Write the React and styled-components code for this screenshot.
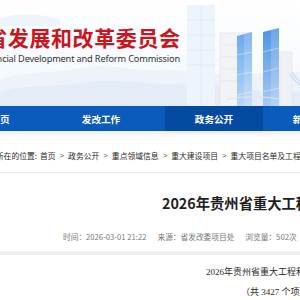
import React from "react";
import styled, { createGlobalStyle } from "styled-components";

const GlobalStyle = createGlobalStyle`
  body {
    margin: 0;
    background: #fff;
    font-family: "Noto Sans CJK SC", "Noto Sans", sans-serif;
    overflow: hidden;
  }
`;

const crumbs = ["首页", "政务公开", "重点领域信息", "重大建设项目", "重大项目名单及工程信息"];

function BannerArt() {
  return (
    <Art viewBox="0 0 300 106" preserveAspectRatio="none">
      <defs>
        <linearGradient id="sky" x1="0" y1="0" x2="0" y2="1">
          <stop offset="0" stopColor="#ffffff" />
          <stop offset="1" stopColor="#f2f7fd" />
        </linearGradient>
        <linearGradient id="towerL" x1="0" y1="0" x2="0" y2="1">
          <stop offset="0" stopColor="#6aa8ee" />
          <stop offset="1" stopColor="#b9d6f6" />
        </linearGradient>
        <linearGradient id="towerR" x1="0" y1="0" x2="0" y2="1">
          <stop offset="0" stopColor="#4e93e4" />
          <stop offset="1" stopColor="#a7caf3" />
        </linearGradient>
      </defs>
      <rect width="300" height="106" fill="url(#sky)" />
      <path d="M0 18 C20 12 45 14 60 20 L60 26 L0 26 Z" fill="#eef4fc" />
      <path d="M0 80 C30 70 50 74 80 68 C110 62 130 72 160 70 C185 68 200 76 230 74 L300 72 L300 106 L0 106 Z" fill="#eef3fa" />
      <path d="M0 92 C25 84 55 88 90 82 C120 78 150 86 180 84 C205 82 225 88 250 90 L300 92 L300 106 L0 106 Z" fill="#e4ecf7" />
      <rect x="187" y="5" width="28" height="101" fill="#edf4fc" />
      <path d="M187 20 H215 M187 35 H215 M187 50 H215 M187 65 H215 M201 5 V106" stroke="#dde9f8" strokeWidth="0.8" />
      <rect x="220" y="33" width="30" height="73" fill="#f1f3f6" stroke="#e2e6ec" strokeWidth="0.8" />
      <path d="M220 45 H250 M220 57 H250 M220 69 H250 M220 81 H250" stroke="#e2e6ec" strokeWidth="0.6" />
      <path d="M237 36 L252 32 L252 106 L237 106 Z" fill="url(#towerL)" />
      <path d="M244 34 L252 32 L252 106 L244 106 Z" fill="#ffffff" opacity="0.18" />
      <path d="M237 55 L252 52 M237 75 L252 72 M237 95 L252 92" stroke="#ffffff" strokeWidth="0.7" opacity="0.6" />
      <path d="M263 32 L279 28 L279 106 L263 106 Z" fill="url(#towerR)" />
      <path d="M271 30 L279 28 L279 106 L271 106 Z" fill="#ffffff" opacity="0.18" />
      <path d="M263 52 L279 48 M263 72 L279 68 M263 92 L279 88" stroke="#ffffff" strokeWidth="0.7" opacity="0.6" />
      <rect x="280" y="52" width="12" height="54" fill="#eef2f7" stroke="#e0e5ec" strokeWidth="0.6" />
      <path d="M290 74 C294 80 298 84 300 85 M292 72 C296 78 299 81 300 82" stroke="#a8c4e8" strokeWidth="0.8" fill="none" />
      <path d="M226 100 C240 96 260 96 280 99" stroke="#dbe6f4" strokeWidth="1.2" fill="none" />
    </Art>
  );
}

export default function App() {
  return (
    <Page>
      <GlobalStyle />
      <Banner>
        <BannerArt />
        <Brand>
          <BrandName>贵州省发展和改革委员会</BrandName>
          <BrandEn>Guizhou Provincial Development and Reform Commission</BrandEn>
        </Brand>
      </Banner>
      <Nav>
        <NavItem $w={100} $shift={-50}>首页</NavItem>
        <NavItem $w={102}>发改工作</NavItem>
        <NavItem $w={98} $shift={13} $active>政务公开</NavItem>
        <NavItem $w={98}>新闻动态</NavItem>
      </Nav>
      <Crumbs>
        <span>您所在的位置:</span>
        {crumbs.map((c, i) => (
          <React.Fragment key={c}>
            {i > 0 && <Sep>&gt;</Sep>}
            <Crumb>{c}</Crumb>
          </React.Fragment>
        ))}
      </Crumbs>
      <Article>
        <Title>2026年贵州省重大工程和重点项目名单</Title>
        <Meta>
          <MetaItem>时间：2026-03-01 21:22</MetaItem>
          <MetaItem>来源：省发改委项目处</MetaItem>
          <MetaItem>浏览量：502次</MetaItem>
        </Meta>
        <Rule />
        <Para $indent={206}>2026年贵州省重大工程和重点项目名单</Para>
        <Para $indent={241}>（共 3427 个项目）</Para>
      </Article>
    </Page>
  );
}

const Page = styled.div`
  width: 300px;
  height: 300px;
  overflow: hidden;
`;

const Banner = styled.header`
  position: relative;
  height: 106px;
  overflow: hidden;
`;

const Art = styled.svg`
  position: absolute;
  inset: 0;
  width: 300px;
  height: 106px;
`;

const Brand = styled.div`
  position: relative;
  width: 180px;
  padding-top: 27px;
  display: flex;
  flex-direction: column;
  align-items: flex-end;
  white-space: nowrap;
`;

const BrandName = styled.div`
  font-size: 21px;
  line-height: 21px;
  font-weight: 700;
  letter-spacing: 0.6px;
  margin-right: -0.6px;
  color: #c8161e;
`;

const BrandEn = styled.div`
  margin-top: 5px;
  font-family: "Noto Sans", "Open Sans", sans-serif;
  font-size: 9.2px;
  letter-spacing: -0.15px;
  line-height: 12px;
  color: #333;
`;

const Nav = styled.nav`
  height: 25px;
  background: #0b5bbd;
  display: flex;
  white-space: nowrap;
`;

const NavItem = styled.div`
  flex: none;
  width: ${(p) => p.$w}px;
  margin-left: ${(p) => p.$shift || 0}px;
  display: flex;
  align-items: center;
  justify-content: center;
  font-size: 9.6px;
  font-weight: 700;
  color: #fff;
  background: ${(p) => (p.$active ? "#034aa0" : "transparent")};
`;

const Crumbs = styled.div`
  height: 42px;
  box-sizing: border-box;
  padding-top: 20px;
  margin-left: -12px;
  background: linear-gradient(#ececec 0, #fafafa 5px, #fff 8px);
  border-bottom: 1px solid #e8e8e8;
  display: flex;
  white-space: nowrap;
  font-size: 7.8px;
  line-height: 10px;
  color: #2a2a2a;
  span:first-child {
    margin-right: 3px;
  }
`;

const Crumb = styled.span``;

const Sep = styled.span`
  margin: 0 4px;
  color: #555;
  font-family: "Liberation Sans", sans-serif;
`;

const Article = styled.main`
  padding-top: 20px;
  white-space: nowrap;
`;

const Title = styled.h1`
  margin: 0;
  padding-left: 162px;
  font-size: 14.3px;
  line-height: 20px;
  font-weight: 700;
  color: #1f1f1f;
`;

const Meta = styled.div`
  margin-top: 19px;
  padding-left: 63px;
  display: flex;
  gap: 11px;
  font-size: 7.7px;
  line-height: 10px;
  color: #777;
`;

const MetaItem = styled.span``;

const Rule = styled.div`
  margin-top: 9px;
  height: 4px;
  background: linear-gradient(#f3f3f3, #ebebeb);
`;

const Para = styled.p`
  margin: 0;
  padding-left: ${(p) => p.$indent}px;
  font-family: "Liberation Serif", "Noto Sans CJK SC", serif;
  font-size: 9px;
  line-height: 20px;
  color: #2a2a2a;
  &:first-of-type {
    margin-top: 7px;
  }
`;
